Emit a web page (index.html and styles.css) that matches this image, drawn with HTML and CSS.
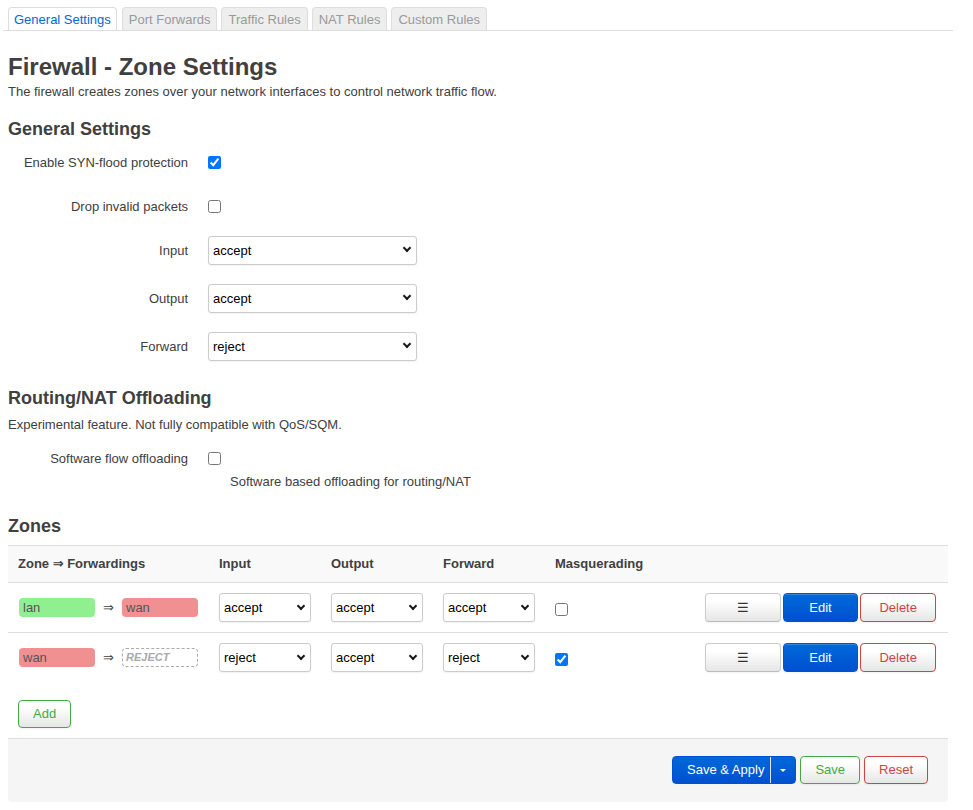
FILE: index.html
```html
<!DOCTYPE html>
<html>
<head>
<meta charset="utf-8">
<title>Firewall - Zone Settings</title>
<link rel="stylesheet" href="styles.css">
</head>
<body>
<div class="page">
  <ul class="tabs">
    <li class="tab active">General Settings</li>
    <li class="tab">Port Forwards</li>
    <li class="tab">Traffic Rules</li>
    <li class="tab">NAT Rules</li>
    <li class="tab">Custom Rules</li>
  </ul>

  <h2 class="title">Firewall - Zone Settings</h2>
  <p class="desc">The firewall creates zones over your network interfaces to control network traffic flow.</p>

  <h3 class="sec sec-general">General Settings</h3>
  <div class="row chk">
    <label class="lbl">Enable SYN-flood protection</label>
    <div class="field"><input class="cb" type="checkbox" checked></div>
  </div>
  <div class="row chk">
    <label class="lbl">Drop invalid packets</label>
    <div class="field"><input class="cb" type="checkbox"></div>
  </div>
  <div class="row selrow">
    <label class="lbl">Input</label>
    <div class="field"><span class="sel wide"><select><option>accept</option><option>reject</option><option>drop</option></select></span></div>
  </div>
  <div class="row selrow">
    <label class="lbl">Output</label>
    <div class="field"><span class="sel wide"><select><option>accept</option><option>reject</option><option>drop</option></select></span></div>
  </div>
  <div class="row selrow">
    <label class="lbl">Forward</label>
    <div class="field"><span class="sel wide"><select><option>reject</option><option>accept</option><option>drop</option></select></span></div>
  </div>

  <h3 class="sec sec-routing">Routing/NAT Offloading</h3>
  <p class="desc">Experimental feature. Not fully compatible with QoS/SQM.</p>
  <div class="row off">
    <label class="lbl">Software flow offloading</label>
    <div class="field"><input class="cb" type="checkbox"></div>
  </div>
  <div class="help">Software based offloading for routing/NAT</div>

  <h3 class="sec sec-zones">Zones</h3>
  <table class="zones">
    <colgroup>
      <col class="c-zone"><col class="c-pol"><col class="c-pol"><col class="c-pol"><col class="c-masq"><col>
    </colgroup>
    <thead>
      <tr>
        <th>Zone ⇒ Forwardings</th>
        <th>Input</th>
        <th>Output</th>
        <th>Forward</th>
        <th>Masquerading</th>
        <th></th>
      </tr>
    </thead>
    <tbody>
      <tr class="first">
        <td><div class="fwd"><span class="badge lan">lan</span><span class="arrow">⇒</span><span class="badge wan">wan</span></div></td>
        <td><span class="sel"><select><option>accept</option><option>reject</option></select></span></td>
        <td><span class="sel"><select><option>accept</option><option>reject</option></select></span></td>
        <td><span class="sel"><select><option>accept</option><option>reject</option></select></span></td>
        <td><input class="cb masq" type="checkbox"></td>
        <td class="acts"><div class="btns"><button class="btn tbtn">☰</button><button class="btn tbtn primary">Edit</button><button class="btn tbtn neg">Delete</button></div></td>
      </tr>
      <tr>
        <td><div class="fwd"><span class="badge wan">wan</span><span class="arrow">⇒</span><span class="badge empty">REJECT</span></div></td>
        <td><span class="sel"><select><option>reject</option><option>accept</option></select></span></td>
        <td><span class="sel"><select><option>accept</option><option>reject</option></select></span></td>
        <td><span class="sel"><select><option>reject</option><option>accept</option></select></span></td>
        <td><input class="cb masq" type="checkbox" checked></td>
        <td class="acts"><div class="btns"><button class="btn tbtn">☰</button><button class="btn tbtn primary">Edit</button><button class="btn tbtn neg">Delete</button></div></td>
      </tr>
    </tbody>
  </table>
  <div class="create"><button class="btn pos">Add</button></div>

  <div class="actions">
    <div class="split"><span class="split-main">Save &amp; Apply</span><span class="split-caret"><span class="tri"></span></span></div>
    <button class="btn pos">Save</button>
    <button class="btn neg">Reset</button>
  </div>
</div>
</body>
</html>
```

FILE: styles.css
```css
body {
  margin: 0;
  font-family: "Liberation Sans", Arial, "DejaVu Sans", sans-serif;
  font-size: 13px;
  line-height: 18px;
  color: #404040;
  background: #fff;
}

.page {
  margin-left: 8px;
  width: 940px;
}

/* Tabs */
.tabs {
  display: flex;
  list-style: none;
  margin: 0 -5px;
  padding: 7px 5px 0;
  border-bottom: 1px solid #ddd;
}
.tab {
  padding: 2px 6px 0;
  line-height: 20px;
  border: 1px solid #ddd;
  border-bottom: 0;
  border-radius: 4px 4px 0 0;
  background: #eee;
  color: #999;
  margin-right: 4px;
}
.tab.active {
  background: #fff;
  color: #0069d6;
  padding: 2px 5px 0;
}
.tab.active + .tab {
  margin-left: 1px;
}

/* Headings */
.title {
  font-size: 24px;
  line-height: 32px;
  font-weight: bold;
  margin: 20px 0 0;
}
.desc {
  margin: 0;
}
.sec {
  font-size: 18px;
  line-height: 27px;
  font-weight: bold;
  margin: 15px 0 4px;
}
.sec-routing { margin-top: 24px; }
.sec-zones { margin-top: 22px; margin-bottom: 5px; }

/* Form rows */
.row {
  display: flex;
  align-items: center;
  height: 30px;
}
.row.chk { margin-bottom: 14px; }
.row.selrow { margin-bottom: 18px; }
.row.off { margin-top: 10px; height: 29px; }
.lbl {
  width: 180px;
  padding-right: 20px;
  padding-top: 1px;
  text-align: right;
  flex: none;
}
.field {
  display: flex;
  align-items: center;
}
.cb {
  margin: 0;
  width: 13px;
  height: 13px;
}
.help {
  margin-left: 222px;
}

/* Selects */
.sel {
  position: relative;
  display: block;
  width: 92px;
}
.sel.wide { width: 209px; }
.sel select {
  -webkit-appearance: none;
  appearance: none;
  display: block;
  box-sizing: border-box;
  width: 100%;
  height: 29px;
  margin: 0;
  padding: 0 18px 0 4px;
  border: 1px solid #ccc;
  border-radius: 3px;
  background: #fff;
  color: #000;
  font-family: "Liberation Sans", Arial, sans-serif;
  font-size: 13px;
  box-shadow: 0 1px 2px rgba(0,0,0,.06);
}
.sel::after {
  content: "";
  position: absolute;
  right: 7px;
  top: 50%;
  margin-top: -5px;
  width: 4px;
  height: 4px;
  border-right: 2px solid #1a1a1a;
  border-bottom: 2px solid #1a1a1a;
  transform: rotate(45deg);
  pointer-events: none;
}

/* Table */
.zones {
  width: 940px;
  border-collapse: separate;
  border-spacing: 0;
  table-layout: fixed;
}
.c-zone { width: 201px; }
.c-pol { width: 112px; }
.c-masq { width: 150px; }
.zones th {
  background: #f9f9f9;
  border-top: 1px solid #ddd;
  border-bottom: 1px solid #ddd;
  padding: 9px 10px;
  text-align: left;
  font-weight: bold;
  line-height: 18px;
  white-space: nowrap;
}
.zones td {
  padding: 10px;
  vertical-align: top;
}
.zones tr.first td {
  border-bottom: 1px solid #ddd;
}
.zones td.acts {
  padding-right: 12px;
}
.masq {
  display: block;
  margin-top: 10px;
}
.fwd {
  display: flex;
  align-items: center;
  height: 29px;
  padding-left: 1px;
}
.badge {
  box-sizing: border-box;
  display: inline-block;
  width: 76px;
  height: 19px;
  line-height: 19px;
  padding: 0 4px;
  border-radius: 4px;
  color: #555;
  white-space: nowrap;
}
.badge.lan { background: #90f090; }
.badge.wan { background: #f09090; }
.badge.empty {
  border: 1px dashed #aaa;
  line-height: 17px;
  color: #aaa;
  font-style: italic;
  font-weight: bold;
  font-size: 11px;
  padding: 0 3px;
}
.arrow {
  display: inline-block;
  width: 27px;
  text-align: center;
  color: #404040;
  font-family: "DejaVu Sans", sans-serif;
  font-size: 13px;
}
.btns {
  display: flex;
  justify-content: flex-end;
  gap: 2px;
}

/* Buttons */
.btn {
  display: inline-block;
  box-sizing: border-box;
  height: 28px;
  line-height: 26px;
  padding: 0 14px;
  margin: 0;
  border: 1px solid #ccc;
  border-bottom-color: #bbb;
  border-radius: 4px;
  background: linear-gradient(#fff, #fff 25%, #e6e6e6);
  color: #333;
  font-family: "Liberation Sans", Arial, sans-serif;
  font-size: 13px;
  text-align: center;
  box-shadow: inset 0 1px 0 rgba(255,255,255,.2), 0 1px 2px rgba(0,0,0,.05);
  cursor: pointer;
}
.tbtn {
  width: 76px;
  height: 29px;
  line-height: 27px;
  padding: 0;
}
.btn.primary {
  background: linear-gradient(#0069d9, #0050d0);
  border-color: #0052cf;
  color: #fff;
}
.btn.neg {
  border-color: #cc4444;
  color: #cc4444;
}
.btn.pos {
  border-color: #44aa44;
  color: #44aa44;
}

.create {
  padding: 18px 10px 10px;
}

/* Page actions */
.actions {
  display: flex;
  justify-content: flex-end;
  gap: 4px;
  background: #f5f5f5;
  border-top: 1px solid #ddd;
  border-radius: 0 0 4px 4px;
  padding: 17px 20px 18px;
}
.split {
  display: flex;
  box-sizing: border-box;
  height: 28px;
  border: 1px solid #0052cf;
  border-radius: 4px;
  background: linear-gradient(#0069d9, #0050d0);
  color: #fff;
}
.split-main {
  padding: 0 6px 0 14px;
  line-height: 26px;
}
.split-caret {
  display: flex;
  align-items: center;
  justify-content: center;
  width: 24px;
  border-left: 1px solid rgba(255,255,255,.85);
}
.tri {
  width: 0;
  height: 0;
  border-left: 3px solid transparent;
  border-right: 3px solid transparent;
  border-top: 3px solid #fff;
}
```
